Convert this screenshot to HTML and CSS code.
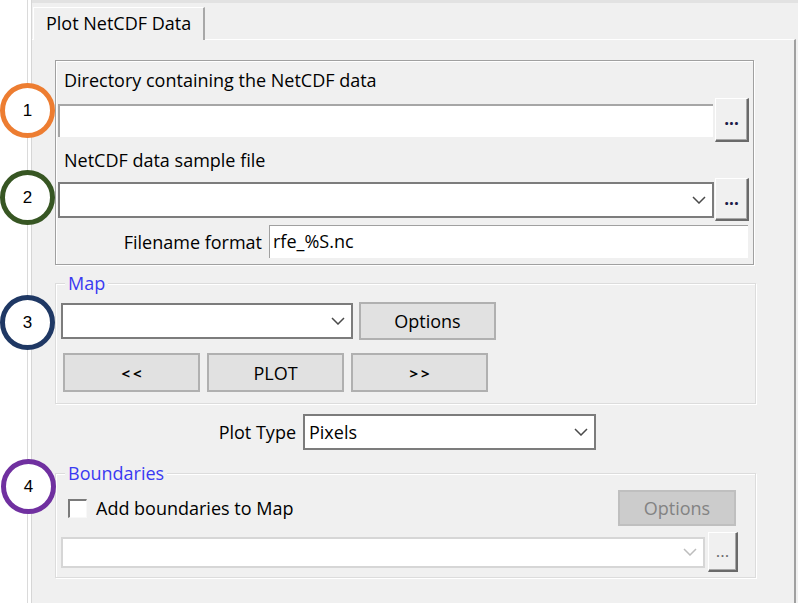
FILE: index.html
```html
<!DOCTYPE html>
<html>
<head>
<meta charset="utf-8">
<link rel="stylesheet" href="styles.css">
</head>
<body>
<div class="frame">
  <div class="window">
    <div class="tabstrip"><div class="tab">Plot NetCDF Data</div></div>
    <div class="content">
      <div class="box">
        <div class="lbl">Directory containing the NetCDF data</div>
        <div class="row r1">
          <div class="field sunken"></div>
          <div class="dots">...</div>
        </div>
        <div class="lbl l2">NetCDF data sample file</div>
        <div class="row r2">
          <div class="combo wide">
            <span></span>
            <svg class="chev" width="14" height="8" viewBox="0 0 14 8"><polyline points="1,1 7,7 13,1" fill="none" stroke="#4a4a4a" stroke-width="1.5"/></svg>
          </div>
          <div class="dots d2">...</div>
        </div>
        <div class="row r3">
          <span class="fmt-label">Filename format</span>
          <div class="field thin">rfe_%S.nc</div>
        </div>
      </div>

      <div class="group map">
        <span class="legend">Map</span>
        <div class="row map-row">
          <div class="combo map-combo">
            <span></span>
            <svg class="chev" width="14" height="8" viewBox="0 0 14 8"><polyline points="1,1 7,7 13,1" fill="none" stroke="#4a4a4a" stroke-width="1.5"/></svg>
          </div>
          <div class="btn opt">Options</div>
        </div>
        <div class="row nav-row">
          <div class="btn nav"><span class="arrows">&lt;&lt;</span></div>
          <div class="btn nav">PLOT</div>
          <div class="btn nav"><span class="arrows">&gt;&gt;</span></div>
        </div>
      </div>

      <div class="row plot-row">
        <span class="pt-label">Plot Type</span>
        <div class="combo pt-combo">
          <span>Pixels</span>
          <svg class="chev" width="14" height="8" viewBox="0 0 14 8"><polyline points="1,1 7,7 13,1" fill="none" stroke="#4a4a4a" stroke-width="1.5"/></svg>
        </div>
      </div>

      <div class="group bnd">
        <span class="legend">Boundaries</span>
        <div class="row chk-row">
          <label class="chk"><span class="box-chk"></span><span>Add boundaries to Map</span></label>
          <div class="btn opt-dis">Options</div>
        </div>
        <div class="row bnd-row">
          <div class="combo dis-combo">
            <span></span>
            <svg class="chev" width="14" height="8" viewBox="0 0 14 8"><polyline points="1,1 7,7 13,1" fill="none" stroke="#bdbdbd" stroke-width="1.5"/></svg>
          </div>
          <div class="dots d3">...</div>
        </div>
      </div>
    </div>
  </div>
</div>

<div class="badge b1">1</div>
<div class="badge b2">2</div>
<div class="badge b3">3</div>
<div class="badge b4">4</div>
</body>
</html>
```

FILE: styles.css
```css
html, body {
  margin: 0;
  padding: 0;
}
body {
  width: 798px;
  height: 603px;
  overflow: hidden;
  position: relative;
  background: #fff;
  font-family: "Open Sans", "Noto Sans", sans-serif;
  font-size: 18px;
  color: #000;
}
.frame {
  margin-left: 27px;
  border-left: 1px solid #dadada;
  padding-left: 3px;
  height: 603px;
  box-sizing: border-box;
  background: #fff;
}
.window {
  border-left: 1px solid #d6d6d6;
  background: #f0f0f0;
  height: 100%;
  display: flex;
  flex-direction: column;
}
.tabstrip {
  box-sizing: border-box;
  height: 39px;
  border-top: 3px solid #e2e2e2;
  padding-top: 4px;
  padding-left: 1px;
  display: flex;
  align-items: flex-start;
}
.tab {
  position: relative;
  z-index: 1;
  box-sizing: border-box;
  width: 172px;
  height: 33px;
  margin-bottom: -1px;
  border-top: 1px solid #fff;
  border-left: 1px solid #fff;
  border-right: 2px solid #a8a8a8;
  background: #f0f0f0;
  padding-left: 12px;
  line-height: 30px;
  white-space: nowrap;
}
.content {
  flex: 1;
  border-top: 1px solid #fff;
  border-right: 2px solid #a0a0a0;
  margin-right: 2px;
  padding: 20px 0 0 23px;
  display: flex;
  flex-direction: column;
  align-items: flex-start;
}
.row {
  display: flex;
  align-items: center;
}

/* directory box */
.box {
  width: 699px;
  box-sizing: border-box;
  border: 1px solid #a0a0a0;
  box-shadow: inset 1px 1px 0 #fff, 1px 1px 0 #fff;
  padding: 0 4px 2px 2px;
  display: flex;
  flex-direction: column;
}
.lbl {
  height: 37px;
  display: flex;
  align-items: center;
  padding-left: 6px;
  white-space: nowrap;
}
.lbl.l2 { height: 36px; }
.r1 { height: 44px; gap: 2px; }
.r2 { height: 43px; gap: 1px; }
.r3 {
  height: 41px;
  justify-content: flex-end;
  padding-right: 1px;
}
.field {
  background: #fff;
  box-sizing: border-box;
}
.field.sunken {
  flex: 1;
  height: 33px;
  border-style: solid;
  border-width: 2px 0 0 2px;
  border-color: #a6a6a6;
}
.field.thin {
  width: 479px;
  height: 33px;
  border-style: solid;
  border-width: 1px 0 0 1px;
  border-color: #a0a0a0;
  padding-left: 3px;
  line-height: 31px;
}
.fmt-label { margin-right: 7px; }

.dots {
  box-sizing: border-box;
  width: 34px;
  height: 44px;
  background: #f0f0f0;
  border-style: solid;
  border-width: 1px 2px 2px 1px;
  border-color: #fff #6a6a6a #6a6a6a #fff;
  box-shadow: inset -1px -1px 0 #a8a8a8;
  display: flex;
  justify-content: center;
  align-items: center;
  font-size: 17px;
  font-weight: bold;
  color: #1c1c48;
  line-height: 1;
  padding-bottom: 2px;
}
.dots.d2 { height: 43px; }
.dots.d3 {
  width: 30px;
  height: 40px;
  color: #6a6a6a;
  font-weight: normal;
}

.combo {
  box-sizing: border-box;
  background: #fff;
  border: 2px solid #7c7c7c;
  display: flex;
  align-items: center;
  justify-content: space-between;
  padding: 0 6px 0 4px;
}
.combo.wide { flex: 1; height: 36px; }
.chev { display: block; }

/* groups */
.group {
  box-sizing: border-box;
  width: 701px;
  border: 1px solid #dcdcdc;
  box-shadow: inset 1px 1px 0 #fff, 1px 1px 0 #fff;
  display: flex;
  flex-direction: column;
  align-items: stretch;
}
.legend {
  align-self: flex-start;
  margin: -11px 0 0 9px;
  padding: 0 3px;
  height: 20px;
  line-height: 20px;
  background: #f0f0f0;
  color: #3a3af2;
}
.group.map {
  margin-top: 18px;
  padding-bottom: 11px;
}
.map-row {
  margin-top: 9px;
  padding-left: 5px;
  gap: 6px;
}
.map-combo { width: 292px; height: 36px; }
.btn {
  box-sizing: border-box;
  background: #e1e1e1;
  border: 2px solid #b0b0b0;
  display: flex;
  align-items: center;
  justify-content: center;
  white-space: nowrap;
}
.btn.opt { width: 137px; height: 38px; }
.nav-row {
  margin-top: 13px;
  padding-left: 7px;
  gap: 7px;
}
.btn.nav { width: 137px; height: 39px; }
.arrows {
  font-size: 15px;
  font-weight: bold;
  letter-spacing: 3px;
  margin-right: -3px;
}

.plot-row {
  margin-top: 10px;
  gap: 7px;
}
.pt-label {
  width: 241px;
  text-align: right;
}
.pt-combo { width: 293px; height: 36px; }

.group.bnd {
  margin-top: 23px;
  padding-bottom: 5px;
}
.chk-row {
  margin-top: 7px;
  height: 36px;
  justify-content: space-between;
  padding-left: 12px;
  padding-right: 19px;
}
.chk {
  display: flex;
  align-items: center;
  gap: 9px;
}
.box-chk {
  box-sizing: border-box;
  width: 19px;
  height: 19px;
  background: #fff;
  border-style: solid;
  border-width: 2px 1px 1px 2px;
  border-color: #7a7a7a #f8f8f8 #f8f8f8 #7a7a7a;
}
.btn.opt-dis {
  width: 118px;
  height: 36px;
  background: #cccccc;
  border-color: #bfbfbf;
  color: #838383;
}
.bnd-row {
  margin-top: 6px;
  height: 40px;
  padding-left: 5px;
  gap: 3px;
}
.dis-combo {
  width: 644px;
  height: 31px;
  border-color: #d6d6d6;
}

/* annotation badges */
.badge {
  position: absolute;
  box-sizing: border-box;
  width: 55px;
  height: 55px;
  border: 5px solid;
  border-radius: 50%;
  background: #fff;
  display: flex;
  align-items: center;
  justify-content: center;
  font-family: "Liberation Sans", "Open Sans", sans-serif;
  font-size: 17px;
  color: #000;
}
.b1 { left: 0; top: 83px; border-color: #ed7d31; }
.b2 { left: 0; top: 170px; border-color: #375623; }
.b3 { left: 0; top: 295px; border-color: #1f3864; }
.b4 { left: 1px; top: 459px; border-color: #7030a0; }
```
